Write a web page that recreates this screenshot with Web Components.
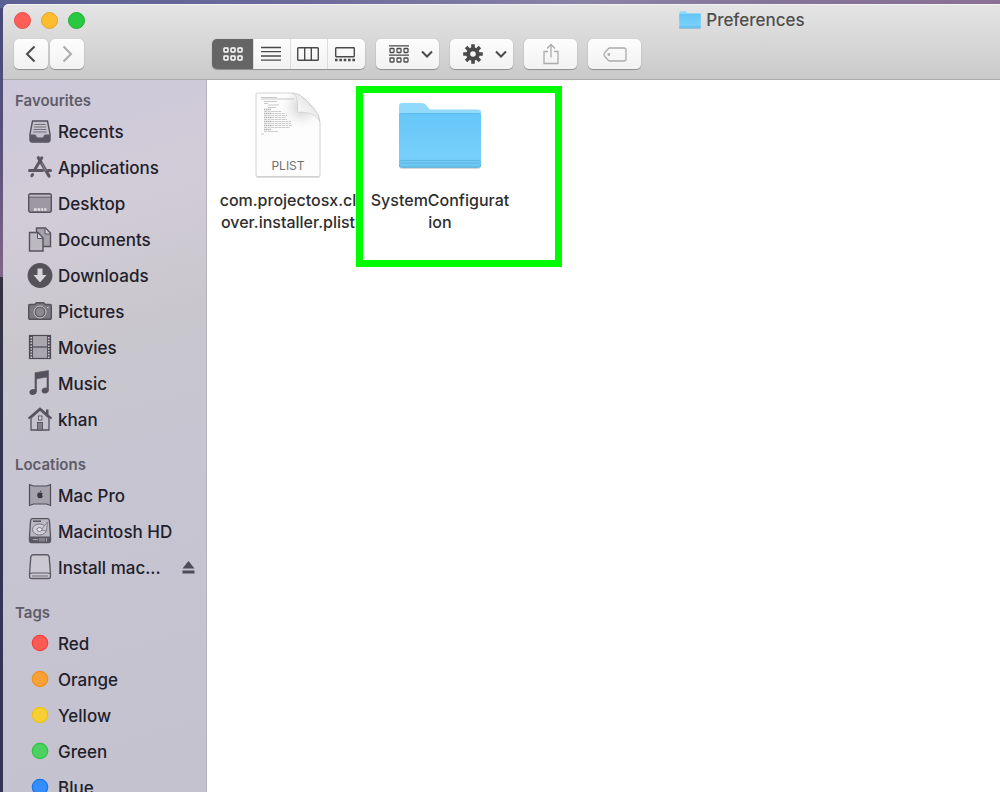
<!DOCTYPE html>
<html lang="en">
<head>
<meta charset="utf-8">
<title>Preferences</title>
<style>
  html, body {
    height: 100%;
  }
  body {
    margin: 0;
    overflow: hidden;
    font-family: Inter, "Liberation Sans", sans-serif;
    color: #22202b;
    background:
      linear-gradient(90deg, #5b6194, #6c6a9b 30%, #7f7aa3 48%, #8a83a8 58%, #857499 78%, #8a7094) top / 100% 8px no-repeat,
      linear-gradient(#454a78, #57507a 18%, #7b6385 33%, #80678a 35%, #33303f 35%, #34344f 50%, #353358);
  }
</style>
</head>
<body>

<finder-window>
  <finder-toolbar slot="toolbar" heading="Preferences"></finder-toolbar>

  <finder-sidebar slot="sidebar">
    <sidebar-section heading="Favourites">
      <sidebar-item icon="recents">Recents</sidebar-item>
      <sidebar-item icon="applications">Applications</sidebar-item>
      <sidebar-item icon="desktop">Desktop</sidebar-item>
      <sidebar-item icon="documents">Documents</sidebar-item>
      <sidebar-item icon="downloads">Downloads</sidebar-item>
      <sidebar-item icon="pictures">Pictures</sidebar-item>
      <sidebar-item icon="movies">Movies</sidebar-item>
      <sidebar-item icon="music">Music</sidebar-item>
      <sidebar-item icon="home">khan</sidebar-item>
    </sidebar-section>
    <sidebar-section heading="Locations">
      <sidebar-item icon="macpro">Mac Pro</sidebar-item>
      <sidebar-item icon="harddisk">Macintosh HD</sidebar-item>
      <sidebar-item icon="external" eject>Install mac...</sidebar-item>
    </sidebar-section>
    <sidebar-section heading="Tags">
      <sidebar-item tag="#fb5b54" ring="#f8403a">Red</sidebar-item>
      <sidebar-item tag="#f8a136" ring="#f39019">Orange</sidebar-item>
      <sidebar-item tag="#f8d034" ring="#f0c012">Yellow</sidebar-item>
      <sidebar-item tag="#4ed162" ring="#2cc344">Green</sidebar-item>
      <sidebar-item tag="#348dfb" ring="#1676f3">Blue</sidebar-item>
    </sidebar-section>
  </finder-sidebar>

  <finder-file icon="plist">com.projectosx.cl<br>over.installer.plist</finder-file>
  <finder-file icon="folder" marked>SystemConfigurat<br>ion</finder-file>
</finder-window>

<script>
  const folderSvg = `
    <svg viewBox="0 0 84 68" aria-hidden="true">
      <defs>
        <linearGradient id="front" x1="0" y1="0" x2="0" y2="1">
          <stop offset="0" stop-color="#65c6f6"/>
          <stop offset=".8" stop-color="#77d0fb"/>
          <stop offset="1" stop-color="#6cc5f0"/>
        </linearGradient>
      </defs>
      <rect x="1.5" y="60" width="81" height="7" rx="2" fill="#000" opacity=".16"/>
      <path d="M1 4Q1 1 4 1H24Q27 1 28.500 3.500L30.500 6Q31.500 7.500 34 7.500H80Q83 7.500 83 10.500V40H1Z" fill="#92dafb"/>
      <path d="M1 13.500Q1 11 4 11H80Q83 11 83 13.500V63Q83 65.500 80.500 65.500H3.500Q1 65.500 1 63Z" fill="url(#front)"/>
      <path d="M1.500 58.500H82.500M1.500 61H82.500" stroke="#5bb4df" stroke-width=".8"/>
      <path d="M1.200 63Q1.500 65.200 3.500 65.200H80.500Q82.500 65.200 82.800 63" stroke="#56aedb" fill="none"/>
      <path d="M1.500 13.500Q1.500 11.500 4 11.500H80Q82.500 11.500 82.500 13.500" stroke="#5ab9ea" stroke-width=".8" fill="none"/>
    </svg>`;

  const plistSvg = `
    <svg viewBox="0 0 68 88" aria-hidden="true">
      <defs>
        <linearGradient id="curl" x1=".2" y1=".8" x2=".8" y2=".2">
          <stop offset="0" stop-color="#fdfdfd"/>
          <stop offset=".6" stop-color="#ececec"/>
          <stop offset="1" stop-color="#d2d2d2"/>
        </linearGradient>
        <radialGradient id="shade" cx="48" cy="15" r="25" gradientUnits="userSpaceOnUse">
          <stop offset="0" stop-color="#c9c9c9"/>
          <stop offset="1" stop-color="#fff" stop-opacity="0"/>
        </radialGradient>
      </defs>
      <path d="M2 3.500Q2 2 3.500 2H39Q45 2 51 8L60 17.500Q66 24 66 31V84.500Q66 86 64.500 86H3.500Q2 86 2 84.500Z" fill="#000" opacity=".13"/>
      <path d="M2 2.500Q2 1 3.500 1H38Q45 1 51 7L60 16.500Q66 23 66 31V83Q66 84.500 64.500 84.500H3.500Q2 84.500 2 83Z" fill="#fdfdfd" stroke="#c6c6c6" stroke-width=".8"/>
      <path d="M22 1.500H38Q45 1.500 51 7L60 16.500Q65.500 23 65.500 31V42H22Z" fill="url(#shade)"/>
      <path d="M38 1Q43 3 43.500 11Q43.500 17 44 20.500Q46 19.500 51 20.500Q62 21.500 66 30Q65 22 60 16.500L51 7Q45 1 38 1Z" fill="url(#curl)" stroke="#c4c4c4" stroke-width=".6"/>
      <g stroke="#9a9a9a" fill="none" stroke-width=".7" opacity=".75">
        <path d="M7 5.500H23M7 7H40M10 9.500H23M10 11.500H14M14 13H25M14 15.500H22"/>
        <path d="M10 17.500H17M10 21.500H17M10 25.500H17M10 29.500H17M10 33.500H17M10 37.500H17" stroke-width="1.500" stroke-dasharray="1.500 .5"/>
        <path d="M10 19.500H28M10 23.500H33M10 27.500H33M10 31.500H37M10 35.500H36M10 39.500H24M17 21.500H31M17 25.500H32M17 29.500H37M17 33.500H38M7 42H10" stroke-dasharray="3 .6"/>
      </g>
      <text x="34" y="78" text-anchor="middle" font-family="Inter, sans-serif" font-size="12" font-weight="400" fill="#707070">PLIST</text>
    </svg>`;

  // sidebar glyphs, drawn on a 24px grid
  const icons = {
    recents: `
      <path d="M4.500 1H19.500L22 14V19.500Q22 22 19.500 22H4.500Q2 22 2 19.500V14Z" fill="#c3bfc9" stroke="#55525e" stroke-width="1.400"/>
      <path d="M6.500 4.500H17.500M6 7H18M5.700 9.500H18.300M5.400 12H18.600" stroke="#77747f"/>
      <path d="M2 14.500H6.500Q8 14.500 8.300 16Q8.600 17.500 10 17.500H14Q15.400 17.500 15.700 16Q16 14.500 17.500 14.500H22V19.500Q22 22 19.500 22H4.500Q2 22 2 19.500Z" fill="#5c5965"/>`,
    applications: `
      <g fill="none" stroke="#5a5762" stroke-linecap="round">
        <path d="M1.500 14.500H14.500M20 14.500H22.500" stroke-width="3"/>
        <path d="M13.800 1.800L6.600 14M4.600 18.500L3.800 19.800" stroke-width="3"/>
        <path d="M10.300 1.800L21 20" stroke-width="3.200"/>
      </g>
      <path d="M13.500 7L18 15" stroke="#aaa7b0" stroke-width=".6"/>`,
    desktop: `
      <rect x=".7" y="1.700" width="22.600" height="18.600" rx="2" fill="#9d98a3" stroke="#55525e" stroke-width="1.400"/>
      <path d="M1.500 4H22.500" stroke="#e0dce3" stroke-width="1"/>
      <path d="M1 5.200H23" stroke="#65626c" stroke-width="1"/>
      <path d="M6 17.500H8.600M9.600 17.500H12.200M13.200 17.500H15.200M16.200 17.500H18.400" stroke="#e5e1e8" stroke-width="2.400"/>`,
    documents: `
      <path d="M8.500 0H17.500L22.500 5V18.500H8.500Z" fill="#a5a2a9" stroke="#55525e" stroke-width="1.400"/>
      <path d="M17 .5V6H22" fill="#d0cdd3" stroke="#55525e"/>
      <path d="M1.500 4.500H10L15 10V23H1.500Z" fill="#bcb9c0" stroke="#55525e" stroke-width="1.400"/>
      <path d="M9.500 4.500V10.500H15Z" fill="#dcd9de" stroke="#55525e"/>`,
    downloads: `
      <circle cx="12" cy="11.500" r="12.400" fill="#55525a"/>
      <path d="M9.500 4.500H14.500V11H18.500L12 18.500L5.500 11H9.500Z" fill="#d8d5db"/>`,
    pictures: `
      <path d="M1.700 4.500H6.500L8.500 2.700H15.500L17.500 4.500H22.300Q23.300 4.500 23.300 5.500V18.300Q23.300 19.300 22.300 19.300H1.700Q.7 19.300 .7 18.300V5.500Q.7 4.500 1.700 4.500Z" fill="#7c7981" stroke="#55525b" stroke-width="1.400"/>
      <circle cx="12" cy="12" r="6" fill="#66636b" stroke="#c5c2c9" stroke-width="1"/>
      <circle cx="12" cy="12" r="4" fill="#8d8a92"/>
      <path d="M19 7.500H20.500" stroke="#c5c2c9"/>`,
    movies: `
      <rect x="1.500" y="-.5" width="21" height="23" fill="#a9a6ae" stroke="#4c4954" stroke-width="1.200"/>
      <path d="M3.200 0V22M20.800 0V22" stroke="#4c4954" stroke-width="3.400"/>
      <path d="M3.200 1V22M20.800 1V22" stroke="#c9c6ce" stroke-width="1.600" stroke-dasharray="1.500 1.300"/>
      <path d="M5 11H19" stroke="#4c4954" stroke-width="1.200"/>`,
    music: `
      <path d="M7 .7L20.500 -1.500V18H19V5L8.500 6.800V19.500H7Z" fill="#55525e" stroke="#55525e" stroke-width=".6"/>
      <ellipse cx="5" cy="20" rx="3.600" ry="2.900" transform="rotate(-15 5 20)" fill="#55525e"/>
      <ellipse cx="17.200" cy="18.500" rx="3.600" ry="2.900" transform="rotate(-15 17.200 18.500)" fill="#55525e"/>`,
    home: `
      <path d="M18 1.500H20.500V8L18 6Z" fill="#55525e"/>
      <path d="M3 10L12 2L21 10V22H3Z" fill="#c5c2cc" stroke="#55525e" stroke-width="1.300"/>
      <path d="M.5 10.500L12 .5L23.500 10.500" fill="none" stroke="#55525e" stroke-width="2"/>
      <rect x="10.500" y="8" width="3.400" height="4" fill="#d6d3dc" stroke="#55525e" stroke-width=".9"/>
      <rect x="9.500" y="14.500" width="5" height="7.500" fill="#827f8a" stroke="#55525e" stroke-width=".9"/>`,
    macpro: `
      <path d="M1.500 .5L5.500 2H18.500L22.500 .5V21.500L18.500 20H5.500L1.500 21.500Z" fill="#a5a2ad" stroke="#4f4c58" stroke-width="1.200"/>
      <path d="M12 8.800C10.500 8 9.200 9 9.200 10.900C9.200 12.600 10.300 14.200 11.200 14.200Q12 13.800 12.900 14.200C13.800 14.200 14.500 13.200 14.800 12.300Q13.300 11.300 14.600 9.300Q13.500 8.100 12 8.800ZM12 8.200Q12 6.800 13.400 6.500Q13.400 8 12 8.200Z" fill="#3a3742"/>`,
    harddisk: `
      <path d="M4.500 -1.400H19.500Q21.200 -1.400 21.400 .5L22.500 16V20.500Q22.500 22.500 20.500 22.500H3.500Q1.500 22.500 1.500 20.500V16L2.600 .5Q2.800 -1.400 4.500 -1.400Z" fill="#bbb8c1" stroke="#55525e" stroke-width="1.300"/>
      <path d="M1.500 16.500H22.500V20.500Q22.500 22.500 20.500 22.500H3.500Q1.500 22.500 1.500 20.500Z" fill="#5c5965"/>
      <path d="M5 19.500H10M12 18V21.500M14 18V21.500M16 18V21.500M18.500 18V21.500" stroke="#aaa7b1"/>
      <path d="M5 1.200H13" stroke="#55525e" stroke-width="1.500"/>
      <ellipse cx="11.500" cy="9.500" rx="7" ry="5.500" fill="#d1ced6" stroke="#77747f"/>
      <path d="M19.500 2L18.500 11L13 10Z" fill="#c9c6ce" stroke="#77747f" stroke-width=".8"/>
      <ellipse cx="11.500" cy="9.500" rx="2.600" ry="1.900" fill="#eeecf0" stroke="#77747f"/>`,
    external: `
      <path d="M5 -1.300H19Q20.800 -1.300 21.200 .8L22.400 16.500V20.500Q22.400 22.500 20.400 22.500H3.600Q1.600 22.500 1.600 20.500V16.500L2.800 .8Q3.200 -1.300 5 -1.300Z" fill="#cbc8d2" stroke="#5d5a66" stroke-width="1.400"/>
      <path d="M2 17.500Q3 17 4.500 17H19.500Q21 17 22 17.500" fill="none" stroke="#5d5a66" stroke-width="1.200"/>
      <path d="M4 20H20" stroke="#8d8a95" stroke-width="1.500"/>`
  };

  class FinderWindow extends HTMLElement {
    constructor() {
      super();
      const shadow = this.attachShadow({ mode: 'open' });

      shadow.innerHTML = `
        <style>
          :host {
            display: flex;
            flex-direction: column;
            box-sizing: border-box;
            height: 100%;
            padding: 4px 0 0 3px;
          }

          .body {
            flex: 1;
            min-height: 0;
            display: flex;
          }

          .files {
            flex: 1;
            min-width: 0;
            display: flex;
            flex-wrap: wrap;
            align-content: flex-start;
            padding: 8px 5px;
            background: #fff;
          }
        </style>

        <slot name="toolbar"></slot>
        <div class="body">
          <slot name="sidebar"></slot>
          <main class="files"><slot></slot></main>
        </div>
      `;
    }
  }

  class FinderToolbar extends HTMLElement {
    constructor() {
      super();
      const shadow = this.attachShadow({ mode: 'open' });

      shadow.innerHTML = `
        <style>
          :host {
            display: block;
            border-bottom: 1px solid #acacac;
            border-top-left-radius: 6px;
            background: linear-gradient(#e5e5e5, #cacaca);
            box-shadow: inset 0 1px #f2f2f2;
          }

          .title {
            display: flex;
            align-items: center;
            height: 32px;
            padding-left: 11px;
          }

          .lights {
            display: flex;
            gap: 10px;
            width: 182px;
          }

          .lights button {
            width: 17px;
            height: 17px;
            padding: 0;
            border: 1px solid;
            border-radius: 50%;
          }

          .close { background: #fe5f57; border-color: #e8504a !important; }
          .min { background: #febc2e; border-color: #e5a528 !important; }
          .max { background: #28c940; border-color: #1eae32 !important; }

          h1 {
            flex: 1;
            display: flex;
            justify-content: center;
            align-items: center;
            gap: 5px;
            margin: 0;
            padding-left: 288px;
            font-size: 17px;
            line-height: 22px;
            font-weight: 500;
            color: #4f4f4f;
          }

          h1 svg {
            width: 22px;
            height: 18px;
          }

          .tools {
            display: flex;
            height: 30px;
            padding: 3px 11px 10px;
          }

          .group {
            display: flex;
            margin-right: 11px;
            border-radius: 5px;
            box-shadow: 0 1px 1px #0000004d, 0 0 1px #00000038;
          }

          .tools button {
            display: flex;
            align-items: center;
            justify-content: center;
            width: 53px;
            padding: 0;
            border: 0;
            border-radius: 5px;
            background: linear-gradient(#fdfdfd, #f2f2f2);
            color: #4a4a4a;
          }

          .tools .nav {
            width: 34px;
            margin-right: 2px;
            box-shadow: 0 1px 1px #0000004d, 0 0 1px #00000038;
          }

          .spacer {
            width: 126px;
          }

          .tools .views button {
            width: 37px;
            padding-right: 2px;
            border-left: 1px solid #dcdcdc;
            border-radius: 0;
          }

          .tools .views button:first-child {
            width: 41px;
            padding: 0;
            border: 0;
            border-radius: 5px 0 0 5px;
            background: #656565;
            color: #fff;
          }

          .tools .views button:last-child {
            width: 38px;
            padding-right: 4px;
            border-radius: 0 5px 5px 0;
          }

          .tools .menu {
            width: 63px;
            gap: 12px;
            padding-left: 6px;
          }

          .tools .off {
            color: #ababab;
          }

          svg {
            fill: none;
            stroke: currentColor;
          }

          h1 svg {
            stroke: none;
          }
        </style>

        <div class="title">
          <div class="lights">
            <button class="close" aria-label="Close"></button>
            <button class="min" aria-label="Minimise"></button>
            <button class="max" aria-label="Zoom"></button>
          </div>
          <h1>${folderSvg}<span></span></h1>
        </div>
        <div class="tools">
          <button class="nav" aria-label="Back">
            <svg width="12" height="18" stroke-width="2"><path d="M9.500 1.500L2 9L9.500 16.500"/></svg>
          </button>
          <button class="nav off" aria-label="Forward">
            <svg width="12" height="18" stroke-width="2"><path d="M2.500 1.500L10 9L2.500 16.500"/></svg>
          </button>
          <div class="spacer"></div>
          <div class="group views">
            <button aria-label="Icons">
              <svg width="20" height="15" stroke-width="1.500">
                <rect x="1" y="1" width="4" height="4" rx=".7"/><rect x="8" y="1" width="4" height="4" rx=".7"/><rect x="15" y="1" width="4" height="4" rx=".7"/>
                <rect x="1" y="9" width="4" height="4" rx=".7"/><rect x="8" y="9" width="4" height="4" rx=".7"/><rect x="15" y="9" width="4" height="4" rx=".7"/>
              </svg>
            </button>
            <button aria-label="List">
              <svg width="20" height="16" stroke-width="1.300"><path d="M0 1.500H20M0 5.700H20M0 10H20M0 14.200H20"/></svg>
            </button>
            <button aria-label="Columns">
              <svg width="22" height="14" stroke-width="1.400"><rect x=".7" y=".7" width="20.600" height="12.600" rx=".8"/><path d="M7.700 1V13M14.300 1V13"/></svg>
            </button>
            <button aria-label="Gallery">
              <svg width="20" height="15" stroke-width="1.400">
                <rect x=".7" y=".7" width="18.600" height="9" rx=".6"/>
                <path d="M0 13H20" stroke-width="2.600" stroke-dasharray="2.600 1.750"/>
              </svg>
            </button>
          </div>
          <div class="group">
            <button class="menu" aria-label="Group by">
              <svg width="20" height="19" stroke-width="1.300">
                <path d="M0 .8H20M0 10.200H20"/>
                <rect x="1" y="3.500" width="4" height="4" rx=".7"/><rect x="8" y="3.500" width="4" height="4" rx=".7"/><rect x="15" y="3.500" width="4" height="4" rx=".7"/>
                <rect x="1" y="13" width="4" height="4" rx=".7"/><rect x="8" y="13" width="4" height="4" rx=".7"/><rect x="15" y="13" width="4" height="4" rx=".7"/>
              </svg>
              <svg width="12" height="8" stroke-width="2"><path d="M1 1.500L6 6.500L11 1.500"/></svg>
            </button>
          </div>
          <div class="group">
            <button class="menu" aria-label="Action">
              <svg width="20" height="20" viewBox="-10 -10 20 20">
                <circle r="4.800" stroke-width="4"/>
                <g stroke-width="3.600">
                  <path d="M0 -6V-9.800M0 6V9.800M-6 0H-9.800M6 0H9.800"/>
                  <path d="M0 -6V-9.800M0 6V9.800M-6 0H-9.800M6 0H9.800" transform="rotate(45)"/>
                </g>
              </svg>
              <svg width="12" height="8" stroke-width="2"><path d="M1 1.500L6 6.500L11 1.500"/></svg>
            </button>
          </div>
          <div class="group">
            <button class="off" aria-label="Share">
              <svg width="18" height="22" stroke-width="1.300"><path d="M6 8.500H2V20.500H16V8.500H12M9 14.500V1.500M5 5.500L9 1.500L13 5.500"/></svg>
            </button>
          </div>
          <div class="group">
            <button class="off" aria-label="Tags">
              <svg width="24" height="15" stroke-width="1.300"><path d="M7 1H21Q23 1 23 3V12Q23 14 21 14H7Q6 14 5 13L1.500 9Q.5 7.500 1.500 6L5 2Q6 1 7 1Z"/><circle cx="5.800" cy="7.500" r=".8"/></svg>
            </button>
          </div>
        </div>
      `;
    }

    connectedCallback() {
      this.shadowRoot.querySelector('h1 span').textContent = this.getAttribute('heading') || '';
    }
  }

  class FinderSidebar extends HTMLElement {
    constructor() {
      super();
      const shadow = this.attachShadow({ mode: 'open' });

      shadow.innerHTML = `
        <style>
          :host {
            flex: none;
            box-sizing: border-box;
            width: 204px;
            padding-top: 8px;
            overflow: hidden;
            border-right: 1px solid #b5b2be;
            background: linear-gradient(165deg, #cdc9da, #d2ccd8 18%, #c9c7cd 36%, #c7c5d1 52%, #c4c2cf);
          }

          nav {
            display: flex;
            flex-direction: column;
            gap: 14px;
          }
        </style>

        <nav><slot></slot></nav>
      `;
    }
  }

  class SidebarSection extends HTMLElement {
    constructor() {
      super();
      const shadow = this.attachShadow({ mode: 'open' });

      shadow.innerHTML = `
        <style>
          :host {
            display: block;
          }

          h2 {
            margin: 0;
            padding-left: 12px;
            font-size: 15px;
            line-height: 26px;
            font-weight: 600;
            color: #5f5c69;
          }
        </style>

        <h2></h2>
        <slot></slot>
      `;
    }

    connectedCallback() {
      this.shadowRoot.querySelector('h2').textContent = this.getAttribute('heading') || '';
    }
  }

  class SidebarItem extends HTMLElement {
    constructor() {
      super();
      const shadow = this.attachShadow({ mode: 'open' });

      shadow.innerHTML = `
        <style>
          :host {
            display: flex;
            align-items: center;
            height: 36px;
            padding: 0 11px 0 25px;
          }

          a {
            flex: 1;
            display: flex;
            align-items: center;
            gap: 6px;
            font-size: 17px;
            line-height: 24px;
            font-weight: 500;
            white-space: nowrap;
            color: inherit;
            text-decoration: none;
          }

          svg {
            flex: none;
            overflow: visible;
          }

          button {
            display: flex;
            padding: 0;
            border: 0;
            background: none;
          }
        </style>

        <a href="#"><svg width="24" height="24" aria-hidden="true"></svg><span><slot></slot></span></a>
      `;
    }

    connectedCallback() {
      const svg = this.shadowRoot.querySelector('svg');
      const tag = this.getAttribute('tag');

      if (tag) {
        svg.innerHTML = `<circle cx="12" cy="11" r="7.700" fill="${tag}" stroke="${this.getAttribute('ring')}" stroke-width="1.200"/>`;
      } else {
        svg.innerHTML = icons[this.getAttribute('icon')] || '';
      }

      if (this.hasAttribute('eject')) {
        const button = document.createElement('button');
        button.setAttribute('aria-label', 'Eject');
        button.innerHTML = '<svg width="13" height="14" fill="#4f4c58"><path d="M6.500 0L12.500 7.500H.5ZM.5 9.500H12.500V12.500H.5Z"/></svg>';
        this.shadowRoot.append(button);
      }
    }
  }

  class FinderFile extends HTMLElement {
    constructor() {
      super();
      const shadow = this.attachShadow({ mode: 'open' });

      shadow.innerHTML = `
        <style>
          :host {
            display: block;
            position: relative;
            width: 152px;
            text-align: center;
            font-size: 16px;
            line-height: 22px;
            font-weight: 500;
            color: #2e2e2e;
          }

          .icon {
            display: flex;
            align-items: center;
            justify-content: center;
            height: 95px;
            margin-bottom: 6px;
          }

          .plist svg {
            width: 68px;
            height: 88px;
          }

          .folder svg {
            width: 84px;
            height: 68px;
          }

          /* marker frame drawn over the item and its neighbours */
          :host([marked])::after {
            content: "";
            position: absolute;
            top: -2px;
            left: -8px;
            width: 192px;
            height: 167px;
            border: 7px solid #00fc00;
          }
        </style>

        <div class="icon"></div>
        <div class="name"><slot></slot></div>
      `;
    }

    connectedCallback() {
      const icon = this.getAttribute('icon');
      const box = this.shadowRoot.querySelector('.icon');
      box.classList.add(icon);
      box.innerHTML = icon === 'folder' ? folderSvg : plistSvg;
    }
  }

  customElements.define('finder-window', FinderWindow);
  customElements.define('finder-toolbar', FinderToolbar);
  customElements.define('finder-sidebar', FinderSidebar);
  customElements.define('sidebar-section', SidebarSection);
  customElements.define('sidebar-item', SidebarItem);
  customElements.define('finder-file', FinderFile);
</script>
</body>
</html>
